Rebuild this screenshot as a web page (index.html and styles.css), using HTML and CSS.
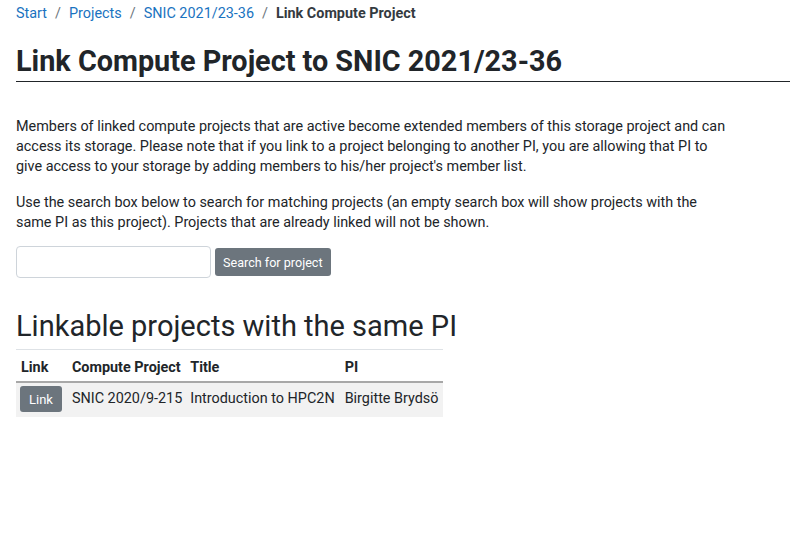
FILE: index.html
```html
<!DOCTYPE html>
<html>
<head>
<meta charset="utf-8">
<link rel="stylesheet" href="styles.css">
</head>
<body>
<div class="page">
  <nav class="crumbs">
    <a href="#">Start</a><span class="sep">/</span>
    <a href="#">Projects</a><span class="sep">/</span>
    <a href="#">SNIC 2021/23-36</a><span class="sep">/</span>
    <span class="current">Link Compute Project</span>
  </nav>
  <h1 class="title">Link Compute Project to SNIC 2021/23-36</h1>
  <div class="text">
    <p>Members of linked compute projects that are active become extended members of this storage project and can access its storage. Please note that if you link to a project belonging to another PI, you are allowing that PI to give access to your storage by adding members to his/her project's member list.</p>
    <p>Use the search box below to search for matching projects (an empty search box will show projects with the same PI as this project). Projects that are already linked will not be shown.</p>
  </div>
  <form class="search">
    <input class="search-input" type="text">
    <button class="btn" type="button">Search for project</button>
  </form>
  <h2 class="subtitle">Linkable projects with the same PI</h2>
  <table class="projects">
    <thead>
      <tr><th>Link</th><th>Compute Project</th><th class="col-title">Title</th><th>PI</th></tr>
    </thead>
    <tbody>
      <tr><td><button class="btn btn-link" type="button">Link</button></td><td>SNIC 2020/9-215</td><td class="col-title">Introduction to HPC2N</td><td>Birgitte Brydsö</td></tr>
    </tbody>
  </table>
</div>
</body>
</html>
```
FILE: styles.css
```css
html, body { margin: 0; padding: 0; background: #fff; }
body {
  font-family: Roboto, "Liberation Sans", sans-serif;
  font-size: 14.4px;
  line-height: 20px;
  color: #212529;
}
.page { padding: 0 0 0 16px; }
.crumbs { display: flex; align-items: center; height: 25px; padding-top: 1px; }
.crumbs a { color: #1a73c0; text-decoration: none; }
.crumbs .sep { color: #6c757d; padding: 0 8px; }
.crumbs .current { font-weight: 700; color: #343a40; }
.title {
  font-size: 28.8px;
  font-weight: 700;
  line-height: 34px;
  margin: 18px 0 0 0;
  padding-bottom: 3px;
  border-bottom: 1px solid #212529;
}
.text { max-width: 712px; margin-top: 35px; }
.text p { margin: 0 0 16px 0; }
.text p:last-child { margin-bottom: 13px; }
.search { display: flex; align-items: center; gap: 4px; }
.search-input {
  width: 195px; height: 32px; box-sizing: border-box;
  border: 1px solid #ced4da; border-radius: 4px; background: #fff;
}
.btn {
  background: #6c757d; color: #fff; border: none; border-radius: 3px;
  font-family: Roboto, "Liberation Sans", sans-serif; font-size: 12.6px;
  height: 28px; padding: 0 8px;
}
.subtitle { font-size: 29px; font-weight: 400; line-height: 34px; margin: 31px 0 6px 0; }
.projects { border-collapse: collapse; }
.projects th, .projects td { padding: 4px 4px; text-align: left; white-space: nowrap; }
.projects th { border-top: 1px solid #dee2e6; border-bottom: 2px solid #a8a8a8; font-weight: 700; padding-top: 8px; padding-bottom: 3px; height: 20px; }
.projects th:first-child { padding-left: 5px; }
.projects .col-title { padding-right: 6px; }
.projects tbody tr { background: #f2f2f2; }
.projects td { height: 26px; padding-top: 3px; padding-bottom: 5px; }
.btn-link { height: 26px; padding: 0 9px; margin-right: 2px; display: block; font-size: 13px; }
```
